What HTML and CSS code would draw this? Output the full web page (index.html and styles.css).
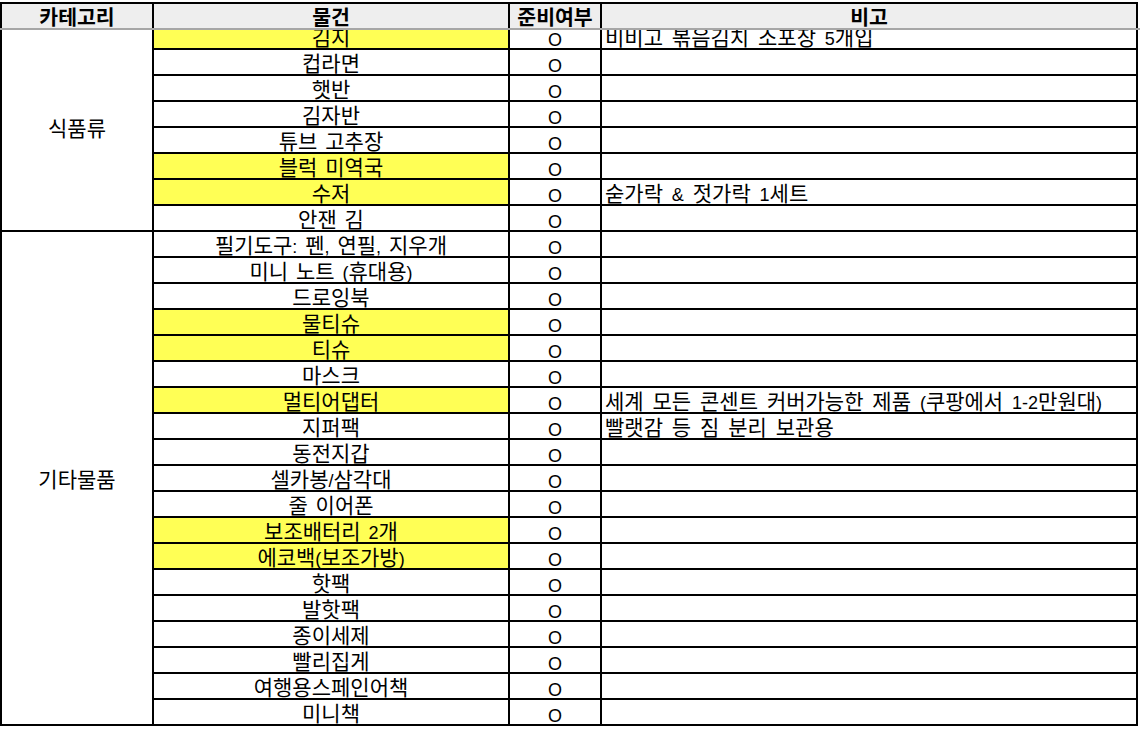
FILE: index.html
```html
<!DOCTYPE html>
<html lang="ko">
<head>
<meta charset="utf-8">
<title>준비물 체크리스트</title>
<link rel="stylesheet" href="styles.css">
</head>
<body>
<div class="sheet">
  <div class="head">
    <div class="hc">카테고리</div>
    <div class="hc">물건</div>
    <div class="hc">준비여부</div>
    <div class="hc">비고</div>
  </div>
  <div class="freeze"></div>
  <div class="view">
    <div class="grid">
      <div class="cat cat-food">식품류</div>
      <div class="item hl">김지</div><div class="chk">O</div><div class="note">비비고 볶음김치 소포장 <span class="l">5</span>개입</div>
      <div class="item">컵라면</div><div class="chk">O</div><div class="note"></div>
      <div class="item">햇반</div><div class="chk">O</div><div class="note"></div>
      <div class="item">김자반</div><div class="chk">O</div><div class="note"></div>
      <div class="item">튜브 고추장</div><div class="chk">O</div><div class="note"></div>
      <div class="item hl">블럭 미역국</div><div class="chk">O</div><div class="note"></div>
      <div class="item hl">수저</div><div class="chk">O</div><div class="note">숟가락 <span class="l">&amp;</span> 젓가락 <span class="l">1</span>세트</div>
      <div class="item">안잰 김</div><div class="chk">O</div><div class="note"></div>

      <div class="cat cat-etc">기타물품</div>
      <div class="item">필기도구<span class="l">:</span> 펜<span class="l">,</span> 연필<span class="l">,</span> 지우개</div><div class="chk">O</div><div class="note"></div>
      <div class="item">미니 노트 <span class="l">(</span>휴대용<span class="l">)</span></div><div class="chk">O</div><div class="note"></div>
      <div class="item">드로잉북</div><div class="chk">O</div><div class="note"></div>
      <div class="item hl">물티슈</div><div class="chk">O</div><div class="note"></div>
      <div class="item hl">티슈</div><div class="chk">O</div><div class="note"></div>
      <div class="item">마스크</div><div class="chk">O</div><div class="note"></div>
      <div class="item hl">멀티어댑터</div><div class="chk">O</div><div class="note">세계 모든 콘센트 커버가능한 제품 <span class="l">(</span>쿠팡에서 <span class="l">1-2</span>만원대<span class="l">)</span></div>
      <div class="item">지퍼팩</div><div class="chk">O</div><div class="note">빨랫감 등 짐 분리 보관용</div>
      <div class="item">동전지갑</div><div class="chk">O</div><div class="note"></div>
      <div class="item">셀카봉<span class="l">/</span>삼각대</div><div class="chk">O</div><div class="note"></div>
      <div class="item">줄 이어폰</div><div class="chk">O</div><div class="note"></div>
      <div class="item hl">보조배터리 <span class="l">2</span>개</div><div class="chk">O</div><div class="note"></div>
      <div class="item hl">에코백<span class="l">(</span>보조가방<span class="l">)</span></div><div class="chk">O</div><div class="note"></div>
      <div class="item">핫팩</div><div class="chk">O</div><div class="note"></div>
      <div class="item">발핫팩</div><div class="chk">O</div><div class="note"></div>
      <div class="item">종이세제</div><div class="chk">O</div><div class="note"></div>
      <div class="item">빨리집게</div><div class="chk">O</div><div class="note"></div>
      <div class="item">여행용스페인어책</div><div class="chk">O</div><div class="note"></div>
      <div class="item">미니책</div><div class="chk">O</div><div class="note"></div>
    </div>
  </div>
</div>
</body>
</html>
```
FILE: styles.css
```css
html, body {
  margin: 0;
  padding: 0;
  background: #ffffff;
  overflow: hidden;
}

body {
  padding-top: 2px;
  font-family: "Noto Sans CJK KR", "Noto Sans", sans-serif;
  font-size: 21px;
  font-weight: 400;
  line-height: 24px;
  color: #000000;
}

.sheet {
  width: 1140px;
}

.head,
.grid {
  display: grid;
  grid-template-columns: 152px 356px 92px 536px;
  width: max-content;
  border-left: 2px solid #000;
}

.head {
  border-top: 2px solid #000;
  background: #eeeeee;
}

.hc {
  height: 24px;
  box-sizing: border-box;
  border-right: 2px solid #000;
  text-align: center;
  font-size: 20.5px;
  font-weight: 700;
  white-space: nowrap;
  overflow: hidden;
}

.freeze {
  height: 2px;
  background: #a6a6a6;
}

.view {
  height: 700px;
  overflow: hidden;
}

.grid {
  margin-top: -6px;
  grid-auto-rows: 26px;
}

.grid > div {
  box-sizing: border-box;
  border-right: 2px solid #000;
  border-bottom: 2px solid #000;
  white-space: nowrap;
  overflow: hidden;
}

.cat {
  grid-column: 1;
  display: flex;
  align-items: center;
  justify-content: center;
}

.cat-food {
  grid-row: 1 / span 8;
}

.cat-etc {
  grid-row: 9 / span 19;
}

.item {
  grid-column: 2;
  text-align: center;
  word-spacing: 2px;
}

.item.hl {
  background: #ffff55;
}

.chk {
  grid-column: 3;
  text-align: center;
  font-family: "Liberation Sans", Arial, sans-serif;
  font-size: 18px;
  padding-top: 4px;
}

.note {
  grid-column: 4;
  padding-left: 3px;
  word-spacing: 3px;
}

.l {
  font-family: "Liberation Sans", Arial, sans-serif;
  font-size: 18px;
}
```
